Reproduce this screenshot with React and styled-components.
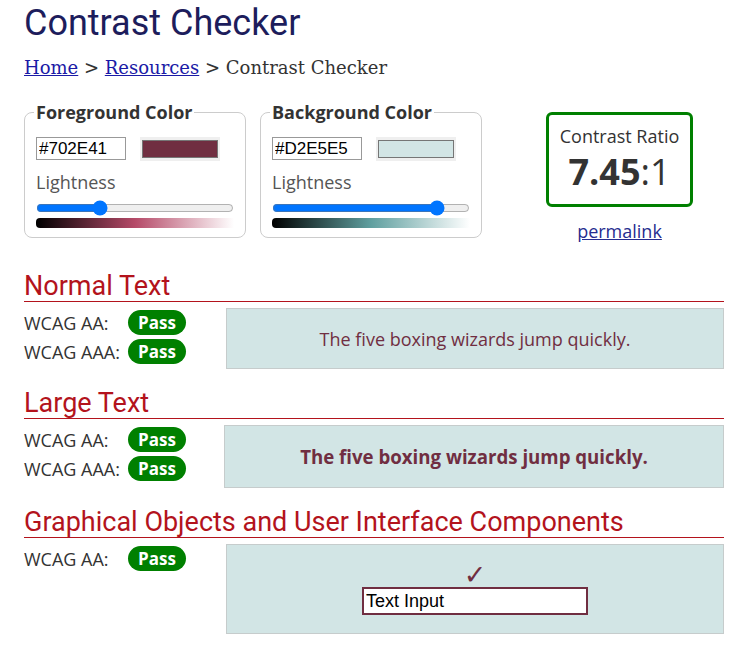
import React from "react"
import styled, { createGlobalStyle } from "styled-components"

const GlobalStyle = createGlobalStyle`
  body {
    margin: 0;
    background: #fff;
    font-family: "Open Sans", sans-serif;
    color: #333;
  }
`

const Page = styled.div`
  width: 700px;
  padding: 2px 0 0 24px;
`

const Title = styled.h1`
  margin: 0;
  font-family: Roboto, sans-serif;
  font-weight: 400;
  font-size: 36px;
  line-height: 42px;
  color: #1d1d5c;
`

const Crumbs = styled.nav`
  margin-top: 13px;
  font-family: "DejaVu Serif", serif;
  font-size: 18px;
  line-height: 21px;
  color: #333;
  a {
    color: #1a1aa6;
  }
`

const TopRow = styled.div`
  display: flex;
  align-items: flex-start;
  gap: 14px;
  margin-top: 22px;
`

const ColorSet = styled.fieldset`
  box-sizing: border-box;
  width: 222px;
  margin: 0;
  padding: 12px 11px 9px;
  border: 1px solid #ccc;
  border-radius: 8px;
  min-width: 0;
`

const Legend = styled.legend`
  padding: 0 2px;
  margin-left: -2px;
  font-weight: 700;
  font-size: 18px;
  line-height: 25px;
  color: #333;
`

const InputRow = styled.div`
  display: flex;
  align-items: flex-start;
  gap: 14px;
`

const HexInput = styled.input`
  box-sizing: border-box;
  width: 90px;
  height: 23px;
  margin: 0;
  padding: 0 2px;
  border: 1px solid #999;
  font-family: "Liberation Sans", Arial, sans-serif;
  font-size: 17px;
  color: #000;
`

const Swatch = styled.div`
  box-sizing: border-box;
  width: 80px;
  height: 24px;
  padding: 3px 2px;
  background: #efefef;
  span {
    display: block;
    height: 100%;
    box-sizing: border-box;
    border: 1px solid #767676;
    background: ${p => p.color};
  }
`

const Label = styled.div`
  margin-top: 9px;
  font-size: 18px;
  line-height: 25px;
  color: #555;
`

const Slider = styled.input`
  display: block;
  box-sizing: border-box;
  width: 100%;
  height: 16px;
  margin: 5px 0 0;
`

const Gradient = styled.div`
  height: 10px;
  margin-top: 2px;
  border-radius: 4px 0 0 4px;
  background: ${p => `linear-gradient(to right, hsl(${p.hue}, ${p.sat}%, 0%), hsl(${p.hue}, ${p.sat}%, 50%), hsl(${p.hue}, ${p.sat}%, 100%))`};
`

const RatioCol = styled.div`
  margin: 12px 0 0 50px;
  display: flex;
  flex-direction: column;
  align-items: center;
`

const RatioBox = styled.div`
  box-sizing: border-box;
  width: 147px;
  height: 95px;
  padding-top: 9px;
  border: 3px solid #008000;
  border-radius: 6px;
  text-align: center;
`

const RatioLabel = styled.div`
  font-size: 18px;
  line-height: 25px;
  color: #333;
`

const RatioValue = styled.div`
  font-size: 36px;
  line-height: 46px;
  color: #333;
  b {
    font-weight: 700;
  }
`

const Permalink = styled.a`
  margin-top: 12px;
  font-size: 18px;
  line-height: 25px;
  color: #262c8f;
`

const Heading = styled.h2`
  margin: ${p => p.first ? "27px" : "19px"} 0 0;
  height: 30px;
  font-family: Roboto, sans-serif;
  font-weight: 400;
  font-size: 27px;
  line-height: 30px;
  color: #b3131c;
  border-bottom: 1px solid #b3131c;
`

const Result = styled.div`
  display: flex;
  align-items: flex-start;
  margin-top: 6px;
`

const Checks = styled.div`
  width: ${p => p.width}px;
  flex-shrink: 0;
`

const CheckRow = styled.div`
  display: flex;
  align-items: center;
  height: 29px;
  font-size: 18px;
`

const CheckName = styled.span`
  width: 104px;
  color: #333;
`

const Badge = styled.span`
  height: 25px;
  line-height: 25px;
  padding: 0 10px;
  border-radius: 13px;
  background: #008000;
  color: #fff;
  font-weight: 700;
  font-size: 17px;
`

const Sample = styled.div`
  box-sizing: border-box;
  flex: 1;
  height: ${p => p.h}px;
  display: flex;
  flex-direction: column;
  align-items: center;
  justify-content: center;
  background: #d2e5e5;
  border: 1px solid #c6cccc;
  color: #702e41;
  font-size: ${p => p.large ? "14pt" : "18px"};
  font-weight: ${p => p.large ? 700 : 400};
`

const Tick = styled.div`
  font-family: "DejaVu Sans", sans-serif;
  font-size: 27px;
  line-height: 24px;
  color: #702e41;
`

const DemoInput = styled.input`
  box-sizing: border-box;
  width: 226px;
  height: 28px;
  margin: 0;
  padding: 0 2px;
  border: 2px solid #702e41;
  background: #fff;
  font-family: "Liberation Sans", Arial, sans-serif;
  font-size: 18px;
  color: #000;
`

const ColorField = ({ title, hex, hue, sat, light }) => (
  <ColorSet>
    <Legend>{title}</Legend>
    <InputRow>
      <HexInput defaultValue={hex} />
      <Swatch color={hex}><span /></Swatch>
    </InputRow>
    <Label>Lightness</Label>
    <Slider type="range" min="0" max="100" defaultValue={light} />
    <Gradient hue={hue} sat={sat} />
  </ColorSet>
)

const Levels = ({ levels, width }) => (
  <Checks width={width}>
    {levels.map(l => (
      <CheckRow key={l}>
        <CheckName>{l}</CheckName>
        <Badge>Pass</Badge>
      </CheckRow>
    ))}
  </Checks>
)

const pangram = "The five boxing wizards jump quickly."

export default function App() {
  return (
    <Page>
      <GlobalStyle />
      <Title>Contrast Checker</Title>
      <Crumbs>
        <a href="#">Home</a> &gt; <a href="#">Resources</a> &gt; Contrast Checker
      </Crumbs>
      <TopRow>
        <ColorField title="Foreground Color" hex="#702E41" hue={343} sat={42} light={31} />
        <ColorField title="Background Color" hex="#D2E5E5" hue={180} sat={25} light={86} />
        <RatioCol>
          <RatioBox>
            <RatioLabel>Contrast Ratio</RatioLabel>
            <RatioValue><b>7.45</b>:1</RatioValue>
          </RatioBox>
          <Permalink href="#">permalink</Permalink>
        </RatioCol>
      </TopRow>

      <Heading first>Normal Text</Heading>
      <Result>
        <Levels levels={["WCAG AA:", "WCAG AAA:"]} width={202} />
        <Sample h={61}>{pangram}</Sample>
      </Result>

      <Heading>Large Text</Heading>
      <Result>
        <Levels levels={["WCAG AA:", "WCAG AAA:"]} width={200} />
        <Sample h={63} large>{pangram}</Sample>
      </Result>

      <Heading>Graphical Objects and User Interface Components</Heading>
      <Result>
        <Levels levels={["WCAG AA:"]} width={202} />
        <Sample h={90}>
          <Tick>✓</Tick>
          <DemoInput defaultValue="Text Input" />
        </Sample>
      </Result>
    </Page>
  )
}
